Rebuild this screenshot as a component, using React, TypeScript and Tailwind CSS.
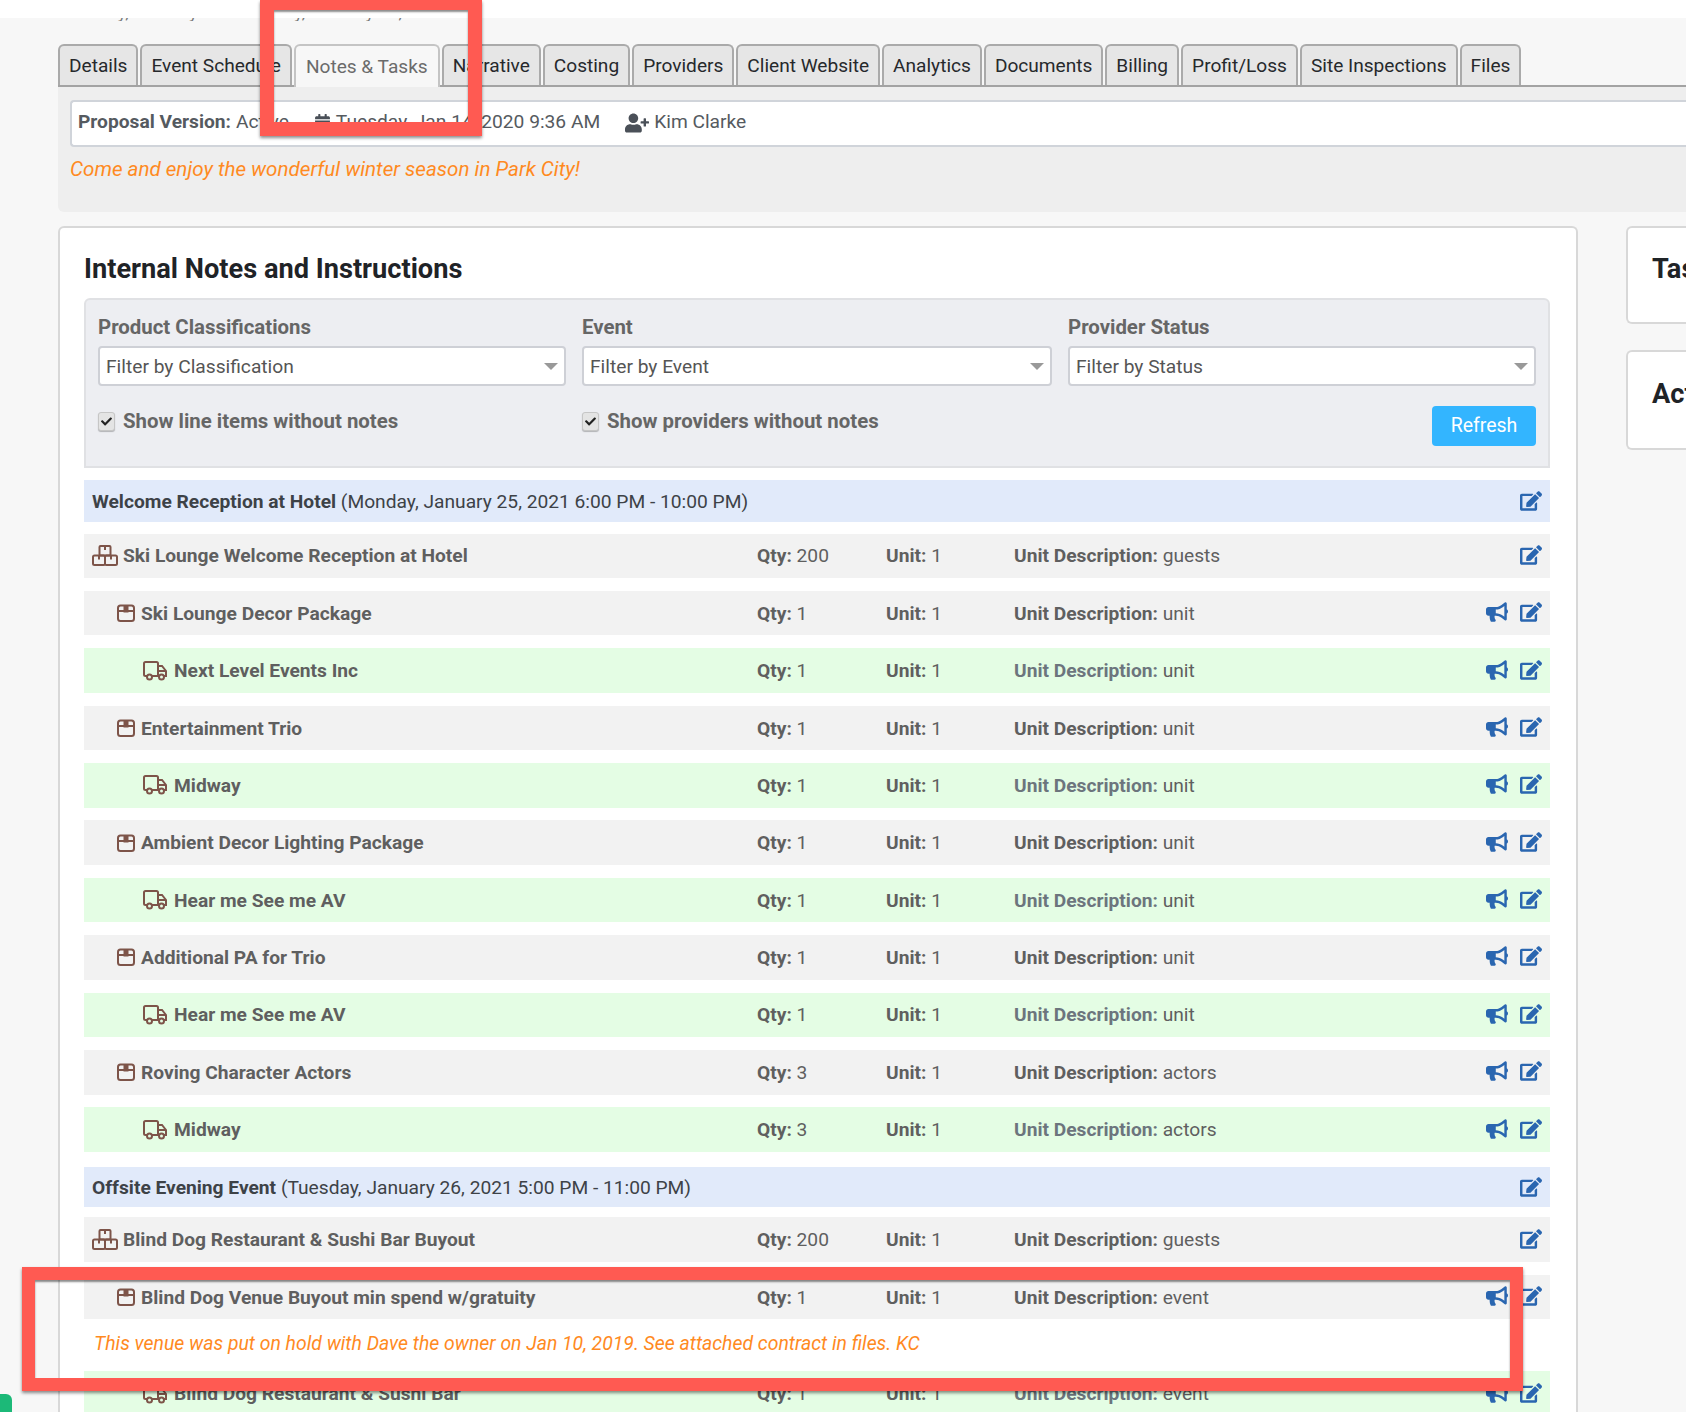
import { FaBullhorn, FaCalendarAlt, FaCheck, FaEdit, FaUserPlus } from "react-icons/fa";

const tabs = [
  "Details",
  "Event Schedule",
  "Notes & Tasks",
  "Narrative",
  "Costing",
  "Providers",
  "Client Website",
  "Analytics",
  "Documents",
  "Billing",
  "Profit/Loss",
  "Site Inspections",
  "Files",
];

type Row = { name: string; level: 0 | 1 | 2; qty: string; desc: string };

const firstRows: Row[] = [
  { name: "Ski Lounge Welcome Reception at Hotel", level: 0, qty: "200", desc: "guests" },
  { name: "Ski Lounge Decor Package", level: 1, qty: "1", desc: "unit" },
  { name: "Next Level Events Inc", level: 2, qty: "1", desc: "unit" },
  { name: "Entertainment Trio", level: 1, qty: "1", desc: "unit" },
  { name: "Midway", level: 2, qty: "1", desc: "unit" },
  { name: "Ambient Decor Lighting Package", level: 1, qty: "1", desc: "unit" },
  { name: "Hear me See me AV", level: 2, qty: "1", desc: "unit" },
  { name: "Additional PA for Trio", level: 1, qty: "1", desc: "unit" },
  { name: "Hear me See me AV", level: 2, qty: "1", desc: "unit" },
  { name: "Roving Character Actors", level: 1, qty: "3", desc: "actors" },
  { name: "Midway", level: 2, qty: "3", desc: "actors" },
];

function BoxesIcon() {
  return (
    <svg className="-translate-y-px" width="26" height="21" viewBox="0 0 26 21" fill="none" stroke="#7d5449" strokeWidth="2">
      <rect x="7.500" y="1" width="11" height="9.500" rx="1" />
      <rect x="1" y="10.500" width="12" height="9.500" rx="1.500" />
      <rect x="13" y="10.500" width="12" height="9.500" rx="1.500" />
      <path d="M13 1v4M7 10.500v4M19 10.500v4" />
    </svg>
  );
}

function BoxIcon() {
  return (
    <svg className="-translate-y-px" width="18" height="18" viewBox="0 0 18 18" fill="none" stroke="#7d5449" strokeWidth="2">
      <rect x="1" y="1.500" width="16" height="15.500" rx="2.500" />
      <path d="M1 7h16" />
      <path d="M6.500 1.500h5v7h-5z" fill="#7d5449" stroke="none" />
    </svg>
  );
}

function TruckIcon() {
  return (
    <svg className="-translate-y-px" width="25" height="20" viewBox="0 0 25 20" fill="none" stroke="#7d5449" strokeWidth="2">
      <path d="M4 15H2.500A1.500 1.500 0 0 1 1 13.500V2.500A1.500 1.500 0 0 1 2.500 1H13.500A1.500 1.500 0 0 1 15 2.500V15H9" />
      <path d="M15 5h4l4 5v5h-2M15 15h1M16 10h7" />
      <circle cx="6.500" cy="16" r="2.500" />
      <circle cx="18.500" cy="16" r="2.500" />
    </svg>
  );
}

function LineRow({ row, tall }: { row: Row; tall?: boolean }) {
  const green = row.level === 2;
  return (
    <div
      className={`grid grid-cols-[673px_129px_128px_1fr_auto] items-center h-[44.5px] pt-[2px] text-[19.2px] text-[#5f5f5f] ${
        green ? "bg-[#e4fde4]" : "bg-[#f2f2f2]"
      } ${tall ? "mb-0" : "mb-[12.9px]"}`}
    >
      <div
        className={`flex items-center font-bold ${
          row.level === 0 ? "pl-[8px] gap-[5px]" : row.level === 1 ? "pl-[33px] gap-[6px]" : "pl-[59px] gap-[6px]"
        }`}
      >
        {row.level === 0 ? <BoxesIcon /> : row.level === 1 ? <BoxIcon /> : <TruckIcon />}
        <span>{row.name}</span>
      </div>
      <div>
        <b>Qty:</b> {row.qty}
      </div>
      <div>
        <b>Unit:</b> 1
      </div>
      <div>
        <b className={green ? "text-[#6c757d]" : ""}>Unit Description:</b> {row.desc}
      </div>
      <div className="flex items-center gap-[12px] pr-[8px] mb-[4px] text-[#2a66b0]">
        {row.level !== 0 && <FaBullhorn className="w-[22px] h-[22px]" />}
        <FaEdit className="w-[22px] h-[22px]" />
      </div>
    </div>
  );
}

function EventHeader({ name, when, className }: { name: string; when: string; className: string }) {
  return (
    <div className={`flex items-center justify-between bg-[#e1eafa] pl-[8px] pr-[8px] text-[19.2px] text-[#3d4247] ${className}`}>
      <div className="pt-[2px]">
        <b>{name}</b> {when}
      </div>
      <FaEdit className="w-[22px] h-[22px] text-[#2a66b0]" />
    </div>
  );
}

function FilterSelect({ label, text }: { label: string; text: string }) {
  return (
    <div>
      <div className="mb-[6px] pt-[1px] h-[27px] leading-[26px] text-[20.400px] font-bold text-[#666666]">{label}</div>
      <div className="flex items-center justify-between h-[40px] rounded-[4px] border-2 border-[#ced0d6] bg-white pl-[6px] pr-[6px] pt-[3px] text-[19.200px] text-[#555555]">
        <span>{text}</span>
        <span className="-mt-[3px] w-0 h-0 border-x-[7px] border-t-[7px] border-x-transparent border-t-[#999999]" />
      </div>
    </div>
  );
}

function ShowCheck({ label }: { label: string }) {
  return (
    <div className="flex items-center gap-[8px] text-[20.400px] font-bold text-[#666666]">
      <span className="flex items-center justify-center w-[17px] h-[19px] rounded-[3px] border border-[#c6c6c6] bg-[#e4e4e4] shadow-[0_1px_1px_rgba(0,0,0,0.25)]">
        <FaCheck className="w-[11px] h-[11px] text-[#222222]" />
      </span>
      {label}
    </div>
  );
}

export default function App() {
  return (
    <div className="relative w-full h-screen overflow-hidden bg-[#f7f7f7] font-['Roboto',sans-serif]">
      <div className="h-[18px] bg-white" />
      <div className="h-[3px] overflow-hidden pl-[62px] text-[18px] leading-[18px] text-[#777777]">
        <div className="-mt-[15px]">Monday, January 25 - Tuesday, January 26, 2021</div>
      </div>

      <div className="mt-[23px] ml-[58px] flex border-b-2 border-[#a3a3a3] h-[43px] gap-[2px]">
        {tabs.map((t) => (
          <div
            key={t}
            className={
              t === "Notes & Tasks"
                ? "h-[43px] pt-[1px] px-[10px] flex items-center rounded-t-[6px] border-2 border-b-0 border-[#c4c4c4] bg-[#f7f7f7] text-[19.100px] text-[#6b6b6b]"
                : "h-[41px] pt-[1px] px-[9px] flex items-center rounded-t-[6px] border-2 border-b-0 border-[#aaaaaa] bg-[#e6e6e6] text-[19.100px] text-[#26292c]"
            }
          >
            {t}
          </div>
        ))}
      </div>

      <div className="ml-[58px] h-[125px] rounded-bl-[6px] bg-[#eeeeee] pl-[12px] pt-[13px]">
        <div className="flex items-center h-[47px] pb-[2px] rounded-l-[4px] border-2 border-r-0 border-[#d0d4da] bg-white pl-[6px] text-[19.200px] text-[#555a60]">
          <b>Proposal Version:</b>
          <span className="ml-[5px]">Active</span>
          <FaCalendarAlt className="ml-[26px] w-[15px] h-[17px] text-[#4a5058]" />
          <span className="ml-[6px]">Tuesday, Jan 14, 2020 9:36 AM</span>
          <FaUserPlus className="ml-[25px] w-[24px] h-[20px] text-[#4a5058]" />
          <span className="ml-[5px]">Kim Clarke</span>
        </div>
        <div className="mt-[7px] text-[20.600px] italic text-[#ff8a1f]">Come and enjoy the wonderful winter season in Park City!</div>
      </div>

      <div className="mt-[14px] flex items-start pl-[58px] gap-[48px]">
        <div className="w-[1520px] shrink-0 rounded-t-[6px] border-2 border-b-0 border-[#d8d8d8] bg-white pl-[24px] pr-[26px] h-[1300px]">
          <h2 className="mt-[23px] h-[35px] leading-[36px] text-[27.200px] font-bold text-[#1f2327]">Internal Notes and Instructions</h2>
          <div className="mt-[12px] h-[170px] rounded-t-[6px] border-2 border-[#e0e1e4] bg-[#edeef2] pl-[12px] pr-[12px] pt-[13px]">
            <div className="grid grid-cols-[467.500px_469.500px_1fr] gap-x-[16.500px]">
              <FilterSelect label="Product Classifications" text="Filter by Classification" />
              <FilterSelect label="Event" text="Filter by Event" />
              <FilterSelect label="Provider Status" text="Filter by Status" />
              <div className="mt-[20px]">
                <ShowCheck label="Show line items without notes" />
              </div>
              <div className="mt-[20px]">
                <ShowCheck label="Show providers without notes" />
              </div>
              <div className="mt-[20px] flex justify-end">
                <div className="flex items-center justify-center w-[104px] h-[40px] rounded-[4px] bg-[#33b5ff] text-[19.500px] text-white">
                  Refresh
                </div>
              </div>
            </div>
          </div>

          <div className="mt-[12px]">
            <EventHeader name="Welcome Reception at Hotel" when="(Monday, January 25, 2021 6:00 PM - 10:00 PM)" className="h-[42px] mb-[11.500px]" />
            {firstRows.map((r, i) => (
              <LineRow key={i} row={r} />
            ))}
            <EventHeader name="Offsite Evening Event" when="(Tuesday, January 26, 2021 5:00 PM - 11:00 PM)" className="h-[40px] mt-[15px] mb-[10.500px]" />
            <LineRow row={{ name: "Blind Dog Restaurant & Sushi Bar Buyout", level: 0, qty: "200", desc: "guests" }} />
            <LineRow row={{ name: "Blind Dog Venue Buyout min spend w/gratuity", level: 1, qty: "1", desc: "event" }} tall />
            <div className="h-[52px] flex items-center pl-[10px] pb-[4px] text-[19.400px] italic text-[#ff8a1f]">
              This venue was put on hold with Dave the owner on Jan 10, 2019. See attached contract in files. KC
            </div>
            <LineRow row={{ name: "Blind Dog Restaurant & Sushi Bar", level: 2, qty: "1", desc: "event" }} />
          </div>
        </div>

        <div className="w-[300px] shrink-0">
          <div className="h-[98px] rounded-l-[6px] border-2 border-r-0 border-[#d8d8d8] bg-white pl-[24px] pt-[23px] text-[27.200px] font-bold leading-[36px] text-[#1f2327]">
            Tasks
          </div>
          <div className="mt-[26px] h-[100px] rounded-l-[6px] border-2 border-r-0 border-[#d8d8d8] bg-white pl-[24px] pt-[24px] text-[27.200px] font-bold leading-[36px] text-[#1f2327]">
            Activity
          </div>
        </div>
      </div>

      {/* annotation boxes drawn over the page */}
      <div className="absolute left-[260px] top-0 w-[222px] h-[136px] border-[14px] border-t-[10px] border-[#ff5a52] shadow-[0_2px_3px_rgba(0,0,0,0.45),inset_0_2px_2px_rgba(0,0,0,0.45)]" />
      <div className="absolute left-[22px] top-[1267px] w-[1501px] h-[124px] border-[13px] border-[#ff5a52] shadow-[0_2px_3px_rgba(0,0,0,0.45),inset_0_2px_2px_rgba(0,0,0,0.45)]" />
      <div className="absolute left-0 top-[1394px] w-[12px] h-[18px] rounded-tr-[6px] bg-[#1cb978]" />
    </div>
  );
}
